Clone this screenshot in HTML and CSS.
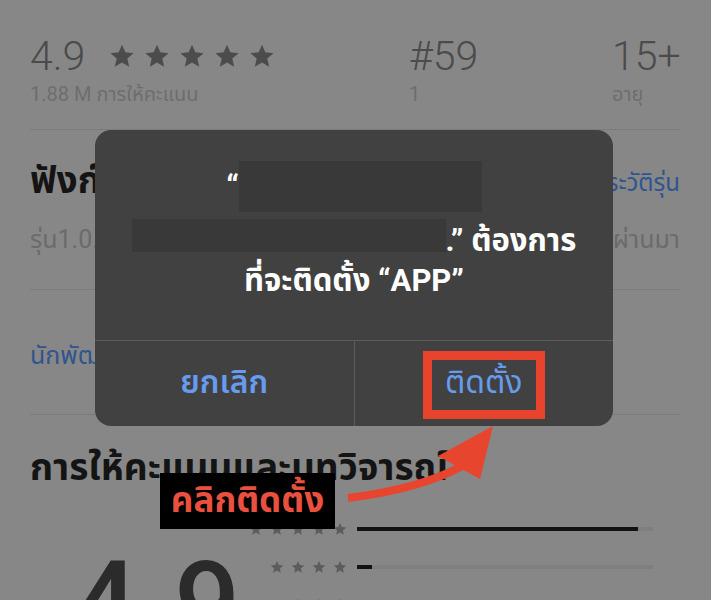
FILE: index.html
```html
<!DOCTYPE html>
<html lang="th">
<head>
<meta charset="utf-8">
<title>App Store</title>
<link rel="stylesheet" href="styles.css">
</head>
<body>
<svg class="defs" width="0" height="0" aria-hidden="true">
  <defs>
    <symbol id="star" viewBox="0 0 24 24"><path d="M12 1.6l3.05 7.05 7.65.7-5.8 5.05 1.72 7.5L12 17.95l-6.62 3.95 1.72-7.5L1.3 9.35l7.65-.7z"/></symbol>
  </defs>
</svg>
<div class="screen">
  <main class="page">
    <section class="stats">
      <div class="stat">
        <div class="stat-top">
          <span class="big">4.9</span>
          <span class="stars-lg">
            <svg><use href="#star"/></svg><svg><use href="#star"/></svg><svg><use href="#star"/></svg><svg><use href="#star"/></svg><svg><use href="#star"/></svg>
          </span>
        </div>
        <div class="stat-sub">1.88 M การให้คะแนน</div>
      </div>
      <div class="stat">
        <div class="stat-top"><span class="big">#59</span></div>
        <div class="stat-sub">1</div>
      </div>
      <div class="stat">
        <div class="stat-top"><span class="big">15+</span></div>
        <div class="stat-sub">อายุ</div>
      </div>
    </section>

    <section class="whatsnew">
      <div class="row head-row">
        <h2 class="heading">ฟังก์ชั่นใหม่</h2>
        <a class="link">ประวัติรุ่น</a>
      </div>
      <div class="row meta-row">
        <span>รุ่น1.0.5</span>
        <span>2 วันที่ผ่านมา</span>
      </div>
    </section>

    <section class="dev">
      <a class="link">นักพัฒนา</a>
    </section>

    <section class="ratings">
      <h2 class="heading">การให้คะแนนและบทวิจารณ์</h2>
      <div class="ratings-body">
        <div class="score">4.9</div>
        <div class="hist">
          <div class="hist-row">
            <span class="stars-sm"><svg><use href="#star"/></svg><svg><use href="#star"/></svg><svg><use href="#star"/></svg><svg><use href="#star"/></svg><svg><use href="#star"/></svg></span>
            <span class="track"><span class="fill" style="width:95%"></span></span>
          </div>
          <div class="hist-row">
            <span class="stars-sm"><svg><use href="#star"/></svg><svg><use href="#star"/></svg><svg><use href="#star"/></svg><svg><use href="#star"/></svg></span>
            <span class="track"><span class="fill" style="width:5%"></span></span>
          </div>
          <div class="hist-row">
            <span class="stars-sm"><svg><use href="#star"/></svg><svg><use href="#star"/></svg><svg><use href="#star"/></svg></span>
            <span class="track"><span class="fill" style="width:1%"></span></span>
          </div>
        </div>
      </div>
    </section>
  </main>

  <div class="dialog">
    <div class="dialog-msg">
      <div class="msg-line line1">“<span class="redact r1"></span></div>
      <div class="msg-line line2"><span class="redact r2"></span>.” ต้องการ</div>
      <div class="msg-line line3">ที่จะติดตั้ง “APP”</div>
    </div>
    <div class="dialog-actions">
      <button class="action cancel">ยกเลิก</button>
      <button class="action install">ติดตั้ง<span class="mark"></span></button>
    </div>
  </div>

  <div class="callout">คลิกติดตั้ง</div>

  <svg class="arrow" width="711" height="600" viewBox="0 0 711 600" aria-hidden="true">
    <path d="M348 498 Q420 489 462 466" fill="none" stroke="#e8452f" stroke-width="8"/>
    <polygon points="493,426 438,456 480,479" fill="#e8452f"/>
  </svg>
</div>
</body>
</html>
```

FILE: styles.css
```css
* { box-sizing: border-box; }

html, body {
  margin: 0;
  padding: 0;
}

body {
  width: 711px;
  height: 600px;
  overflow: hidden;
  background: #878787;
  font-family: "Roboto", "Noto Sans Thai", "Noto Sans", sans-serif;
  color: #4a4a4a;
}

.defs { position: absolute; }

.screen {
  position: relative;
  width: 711px;
  height: 600px;
  overflow: hidden;
}

.page {
  padding: 0 31px 0 30px;
}

/* stats */
.stats {
  display: grid;
  grid-template-columns: 379px 203px 1fr;
  height: 130px;
  padding-top: 34px;
  border-bottom: 1px solid #7b7b7b;
}

.stat-top {
  display: flex;
  align-items: center;
  gap: 24px;
  height: 44px;
}

.big {
  font-size: 41px;
  font-weight: 300;
  line-height: 44px;
  color: #4b4b4b;
}

.stars-lg {
  display: flex;
  gap: 9px;
}

.stars-lg svg {
  width: 26px;
  height: 26px;
  fill: #4c4c4c;
}

.stat-sub {
  margin-top: 3px;
  font-size: 20px;
  line-height: 26px;
  color: #6e6e6e;
}

/* what's new */
.row {
  display: flex;
  justify-content: space-between;
  align-items: center;
}

.whatsnew {
  height: 160px;
  padding-top: 27px;
  border-bottom: 1px solid #7b7b7b;
}

.heading {
  margin: 0;
  font-size: 37px;
  font-weight: 700;
  color: #141414;
  line-height: 48px;
}

.link {
  font-size: 24px;
  color: #30558f;
}

.head-row .link {
  margin-top: 6px;
}

.meta-row {
  margin-top: 18px;
  font-size: 25px;
  line-height: 34px;
  color: #6b6b6b;
}

.dev {
  height: 125px;
  padding-top: 49px;
  border-bottom: 1px solid #7b7b7b;
}

.dev .link {
  font-size: 25px;
  line-height: 34px;
}

/* ratings */
.ratings {
  padding-top: 29px;
}

.ratings-body {
  display: flex;
  justify-content: space-between;
  margin-top: 18px;
}

.score {
  padding-left: 42px;
  padding-top: 37px;
  font-size: 116px;
  font-weight: 500;
  line-height: 114px;
  color: #2b2b2b;
  letter-spacing: 2px;
}

.hist {
  display: flex;
  flex-direction: column;
  margin-right: 27px;
}

.hist-row {
  display: flex;
  align-items: center;
  gap: 10px;
  height: 38px;
}

.stars-sm {
  display: flex;
  justify-content: flex-end;
  gap: 7px;
  width: 99px;
}

.stars-sm svg {
  width: 14px;
  height: 14px;
  fill: #5c5c5c;
}

.track {
  display: block;
  width: 296px;
  height: 4px;
  background: #7f7f7f;
}

.fill {
  display: block;
  height: 100%;
  background: #121212;
}

/* dialog */
.dialog {
  position: absolute;
  left: 95px;
  top: 130px;
  width: 518px;
  height: 296px;
  border-radius: 16px;
  background: #414141;
  display: flex;
  flex-direction: column;
}

.dialog-msg {
  height: 210px;
  padding-top: 37px;
  text-align: center;
  color: #ffffff;
  font-size: 31px;
  font-weight: 700;
}

.msg-line {
  line-height: 40px;
  white-space: nowrap;
}

.line1 { margin-bottom: 14px; }

.redact {
  display: inline-block;
  background: #393939;
  vertical-align: middle;
}

.r1 {
  width: 243px;
  height: 51px;
  margin: -8px 0 -8px 0;
  position: relative;
  top: -2px;
}

.r2 {
  width: 314px;
  height: 33px;
  margin: -4px 0;
  position: relative;
  top: -7px;
}

.dialog-actions {
  flex: 1;
  display: flex;
  border-top: 1px solid #5c5c5c;
}

.action {
  position: relative;
  flex: 1;
  border: 0;
  margin: 0;
  padding: 0 0 2px;
  background: transparent;
  font-family: inherit;
  font-size: 32px;
  color: #669bee;
}

.cancel {
  font-weight: 600;
  border-right: 1px solid #5c5c5c;
}

.install { font-weight: 400; }

.mark {
  position: absolute;
  left: 68px;
  top: 10px;
  width: 122px;
  height: 68px;
  border: 9px solid #e8432c;
}

.callout {
  position: absolute;
  left: 160px;
  top: 473px;
  width: 175px;
  height: 56px;
  background: #000;
  color: #e9503d;
  font-size: 35px;
  font-weight: 700;
  line-height: 56px;
  text-align: center;
}

.arrow {
  position: absolute;
  left: 0;
  top: 0;
  pointer-events: none;
}
```
